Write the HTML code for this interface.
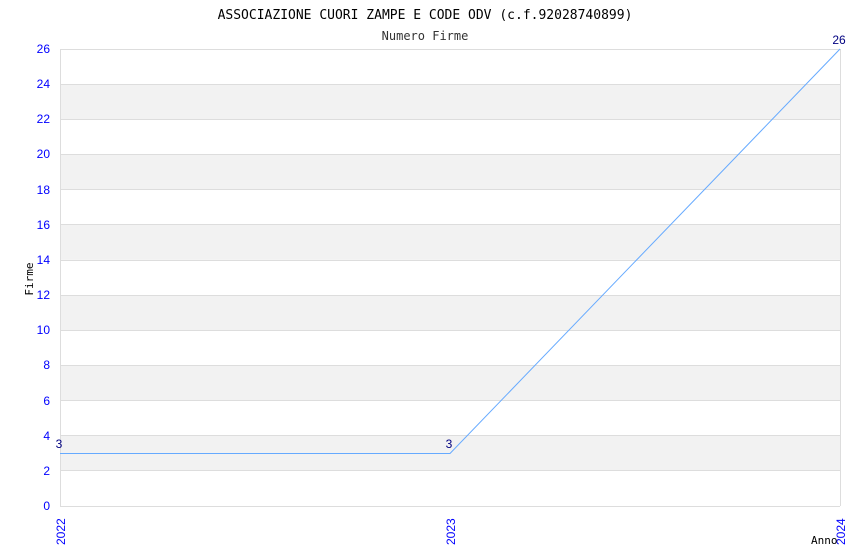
<!DOCTYPE html><html><head><style>body{margin:0;background:#fff}svg{display:block}</style></head><body>
<svg width="850" height="550" xmlns="http://www.w3.org/2000/svg" font-family="DejaVu Sans Mono, Liberation Mono, monospace">
<rect width="850" height="550" fill="#fff"/>
<g fill="#f2f2f2">
<rect x="60" y="435.5" width="780" height="35.2"/>
<rect x="60" y="365.2" width="780" height="35.2"/>
<rect x="60" y="295" width="780" height="35.1"/>
<rect x="60" y="224.7" width="780" height="35.1"/>
<rect x="60" y="154.4" width="780" height="35.1"/>
<rect x="60" y="84.1" width="780" height="35.2"/>
</g>
<g stroke="#dddddd" stroke-width="1">
<line x1="60" x2="840" y1="49.5" y2="49.5"/><line x1="60" x2="840" y1="84.5" y2="84.5"/><line x1="60" x2="840" y1="119.5" y2="119.5"/><line x1="60" x2="840" y1="154.5" y2="154.5"/><line x1="60" x2="840" y1="189.5" y2="189.5"/><line x1="60" x2="840" y1="224.5" y2="224.5"/><line x1="60" x2="840" y1="260.5" y2="260.5"/><line x1="60" x2="840" y1="295.5" y2="295.5"/><line x1="60" x2="840" y1="330.5" y2="330.5"/><line x1="60" x2="840" y1="365.5" y2="365.5"/><line x1="60" x2="840" y1="400.5" y2="400.5"/><line x1="60" x2="840" y1="435.5" y2="435.5"/><line x1="60" x2="840" y1="470.5" y2="470.5"/>
<line x1="60.5" x2="60.5" y1="49" y2="506"/><line x1="840.5" x2="840.5" y1="49" y2="506"/><line x1="60" x2="840" y1="506.5" y2="506.5"/>
</g>
<polyline points="60,453.5 450,453.5 840,49" fill="none" stroke="#66aaff" stroke-width="1"/>
<g fill="#0000ff" font-size="12" text-anchor="end" font-family="Liberation Sans, Arial, sans-serif">
<text x="50" y="510">0</text><text x="50" y="475">2</text><text x="50" y="440">4</text><text x="50" y="405">6</text><text x="50" y="369">8</text><text x="50" y="334">10</text><text x="50" y="299">12</text><text x="50" y="264">14</text><text x="50" y="229">16</text><text x="50" y="194">18</text><text x="50" y="158">20</text><text x="50" y="123">22</text><text x="50" y="88">24</text><text x="50" y="53">26</text>
</g>
<g fill="#0000ff" font-size="12" font-family="Liberation Sans, Arial, sans-serif">
<text transform="translate(65,545) rotate(-90)">2022</text>
<text transform="translate(455,545) rotate(-90)">2023</text>
<text transform="translate(845,545) rotate(-90)">2024</text>
</g>
<g fill="#000080" font-size="12" text-anchor="middle" font-family="Liberation Sans, Arial, sans-serif">
<text x="59" y="448">3</text><text x="449" y="448">3</text><text x="839" y="44">26</text>
</g>
<text x="425" y="19" font-size="13" text-anchor="middle" fill="#000">ASSOCIAZIONE CUORI ZAMPE E CODE ODV (c.f.92028740899)</text>
<text x="425" y="40" font-size="12" text-anchor="middle" fill="#333">Numero Firme</text>
<text transform="translate(33,279) rotate(-90)" font-size="11" text-anchor="middle" fill="#000">Firme</text>
<text x="811" y="544" font-size="11" fill="#000">Anno</text>
</svg>
</body></html>
